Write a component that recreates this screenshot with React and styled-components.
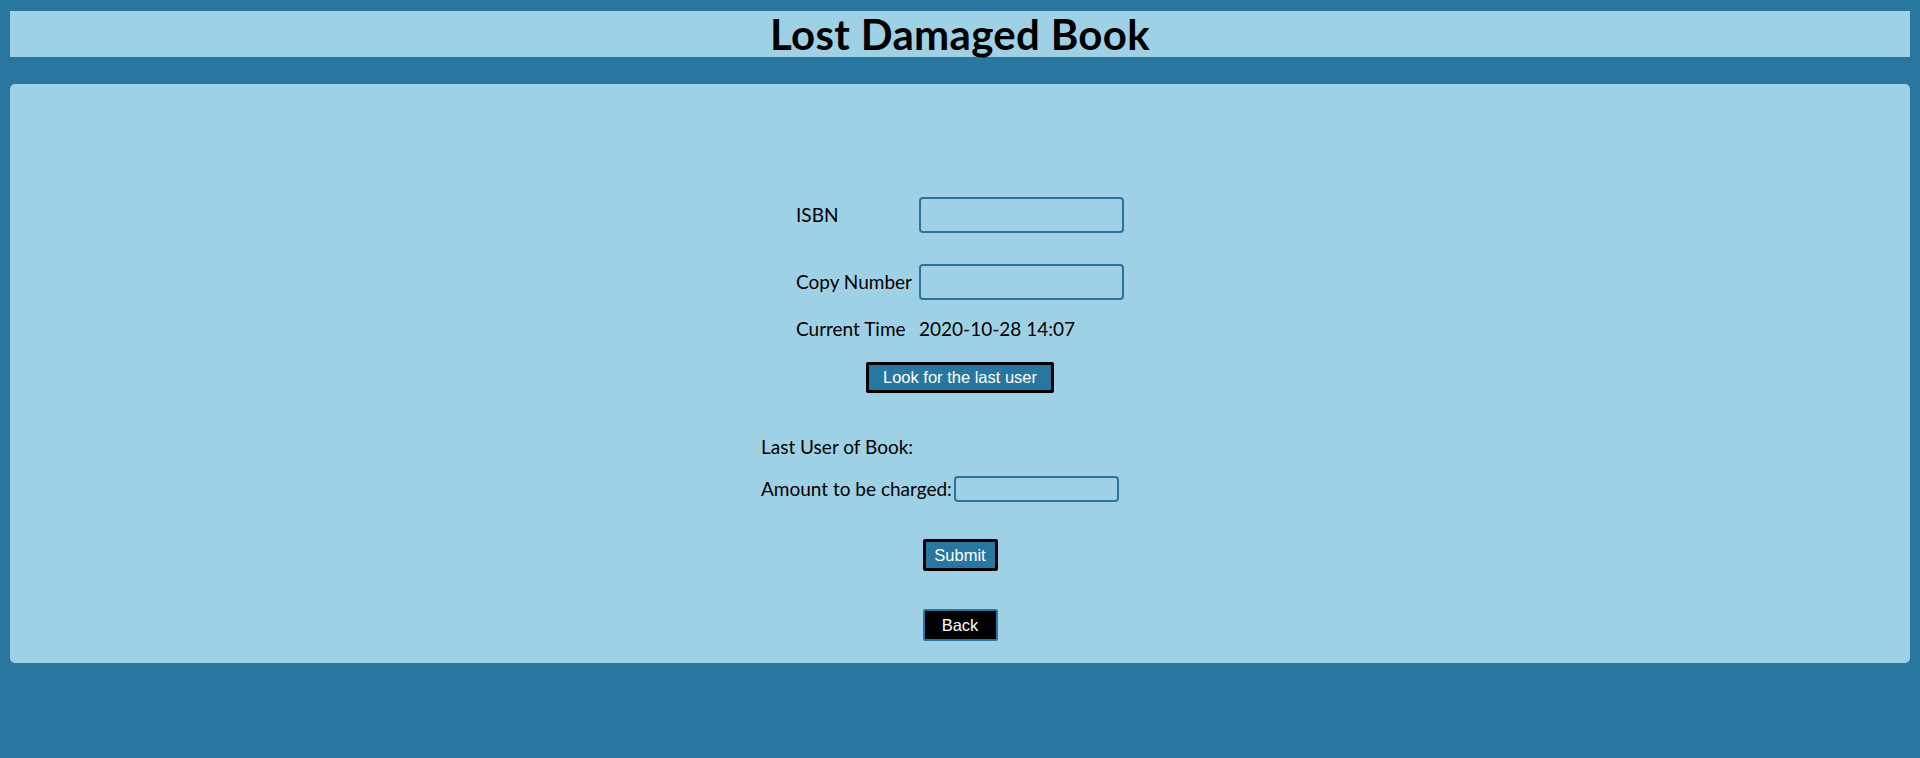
import React, { useState } from 'react'
import styled, { createGlobalStyle } from 'styled-components'

const GlobalStyle = createGlobalStyle`
   html, body {
      margin: 0;
      padding: 0;
      background: #2877a0;
   }
   body {
      font-family: Lato, 'Open Sans', sans-serif;
      color: #000;
      min-height: 758px;
   }
`

const Page = styled.div`
   padding: 11px 10px 0;
   display: flex;
   flex-direction: column;
   gap: 27px;
`

const Header = styled.header`
   height: 46px;
   background: #9fd1e6;
   display: flex;
   justify-content: center;
   align-items: center;
`

const Title = styled.h1`
   margin: 0;
   font-size: 42px;
   font-weight: 700;
   line-height: 46px;
   letter-spacing: 0.3px;
`

const Panel = styled.main`
   background: #9fd1e6;
   border-radius: 5px;
   padding: 113px 0 22px;
   display: flex;
   flex-direction: column;
   align-items: center;
`

const Table = styled.div`
   display: grid;
   grid-template-columns: 123px 205px;
   align-items: center;
   font-size: 19px;
   line-height: 24px;
`

const Label = styled.span`
   white-space: nowrap;
`

const Field = styled.input`
   box-sizing: border-box;
   width: ${({ w }) => w || 205}px;
   height: ${({ h }) => h || 36}px;
   border: 2px solid #2a729b;
   border-radius: 4px;
   background: transparent;
   outline: none;
   font-size: 16px;
`

const Spacer = styled.div`
   grid-column: 1 / -1;
   height: ${({ h }) => h}px;
`

const Button = styled.button`
   font-family: 'Liberation Sans', Arial, sans-serif;
   font-size: 16.5px;
   line-height: 19px;
   color: #fff;
   background: ${({ dark }) => (dark ? '#000' : '#2877a0')};
   border: ${({ dark }) => (dark ? '2px solid #2877a0' : '3px solid #000')};
   border-radius: 2px;
   box-sizing: border-box;
   height: ${({ h }) => h || 32}px;
   width: ${({ w }) => (w ? `${w}px` : 'auto')};
   padding: ${({ w }) => (w ? '0' : '0 14px')};
   margin-top: ${({ mt }) => mt || 0}px;
   cursor: pointer;
`

const Result = styled.div`
   width: 398px;
   margin-top: 42px;
   display: flex;
   flex-direction: column;
   gap: 17px;
   font-size: 19px;
   line-height: 24px;
`

const Row = styled.div`
   display: flex;
   align-items: center;
   gap: 2px;
`

export default function App() {
   const [isbn, setIsbn] = useState('')
   const [copy, setCopy] = useState('')
   const [amount, setAmount] = useState('')

   return (
      <>
         <GlobalStyle />
         <Page>
            <Header>
               <Title>Lost Damaged Book</Title>
            </Header>
            <Panel>
               <Table>
                  <Label>ISBN</Label>
                  <Field value={isbn} onChange={(e) => setIsbn(e.target.value)} />
                  <Spacer h={31} />
                  <Label>Copy Number</Label>
                  <Field value={copy} onChange={(e) => setCopy(e.target.value)} />
                  <Spacer h={17} />
                  <Label>Current Time</Label>
                  <Label>2020-10-28 14:07</Label>
               </Table>
               <Button h={31} mt={21}>Look for the last user</Button>
               <Result>
                  <Label>Last User of Book:</Label>
                  <Row>
                     <Label>Amount to be charged:</Label>
                     <Field
                        w={165}
                        h={26}
                        value={amount}
                        onChange={(e) => setAmount(e.target.value)}
                     />
                  </Row>
               </Result>
               <Button w={75} mt={37}>Submit</Button>
               <Button w={75} mt={38} dark>Back</Button>
            </Panel>
         </Page>
      </>
   )
}
